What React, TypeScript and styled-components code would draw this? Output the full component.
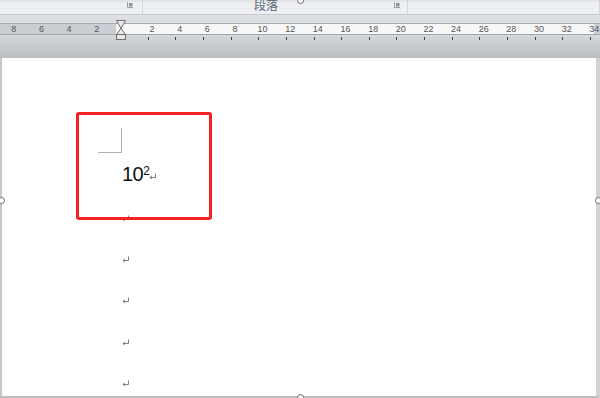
import React from 'react';
import styled, { createGlobalStyle } from 'styled-components';

const GlobalStyle = createGlobalStyle`
  html, body {
    margin: 0;
    padding: 0;
    overflow: hidden;
    background: #ffffff;
  }
  #root {
    width: 600px;
    height: 398px;
  }
`;

const cellWidth = 27.65;
const rulerLabels = [8, 6, 4, 2, 0, 2, 4, 6, 8, 10, 12, 14, 16, 18, 20, 22, 24, 26, 28, 30, 32, 34];

const Window = styled.div`
  position: relative;
  width: 600px;
  height: 398px;
  display: flex;
  flex-direction: column;
  overflow: hidden;
  font-family: 'Liberation Sans', Arial, sans-serif;
`;

const RibbonStrip = styled.div`
  flex-shrink: 0;
  height: 14px;
  display: flex;
  background: linear-gradient(#dcdfe3 0, #edeff2 3px, #eef0f3 100%);
  border-bottom: 1px solid #c6cad0;
`;

const RibbonGroup = styled.div<{ width: number; pad: number }>`
  width: ${(p) => p.width}px;
  position: relative;
  display: flex;
  justify-content: center;
  padding-right: ${(p) => p.pad}px;
  box-sizing: border-box;
  border-right: 1px solid #d3d6db;
  overflow: hidden;
`;

const GroupLabel = styled.span`
  font-family: 'Noto Sans CJK SC', sans-serif;
  font-size: 12px;
  line-height: 12px;
  margin-top: -1px;
  color: #5a6577;
`;

const Launcher = styled.svg<{ right: number }>`
  position: absolute;
  top: 2px;
  right: ${(p) => p.right}px;
  width: 6px;
  height: 6px;
`;

const RulerArea = styled.div`
  flex-shrink: 0;
  position: relative;
  height: 43px;
  padding-top: 8px;
  box-sizing: border-box;
  background: linear-gradient(#dfe1e5 0, #dadce0 8px, #d5d8dc 20px, #babdc2 100%);
`;

const Scale = styled.div`
  height: 10px;
  display: flex;
  margin-left: -3.8px;
  padding-left: 3.8px;
  border-top: 1px solid #a9adb3;
  border-bottom: 1px solid #a3a7ad;
  background: linear-gradient(to right, #cacdd2 0 120px, #f7f7f7 120px 598px, #cacdd2 598px);
`;

const ScaleCell = styled.div`
  flex: 0 0 ${cellWidth}px;
  text-align: center;
  font-size: 9px;
  line-height: 10px;
  color: #555555;
`;

const TickRow = styled.div`
  display: flex;
  margin-left: -3.8px;
  padding-top: 2px;
`;

const TickCell = styled.div<{ show: boolean }>`
  flex: 0 0 ${cellWidth}px;
  height: 3px;
  display: flex;
  justify-content: center;
  &::after {
    content: '';
    width: 1px;
    height: 3px;
    background: ${(p) => (p.show ? '#3d3d3d' : 'transparent')};
  }
`;

const IndentMarker = styled.svg`
  position: absolute;
  left: 115px;
  top: 4px;
  width: 12px;
  height: 22px;
`;

const Page = styled.div`
  position: relative;
  flex: 1;
  min-height: 0;
  overflow: hidden;
  background: #ffffff;
  border-left: 2px solid #c7c7c7;
  border-right: 4px solid #d3d3d3;
  border-bottom: 2px solid #bebebe;
  padding: 70px 0 0 96px;
`;

const CropMark = styled.div`
  width: 23px;
  height: 24px;
  border-right: 1px solid #b3b3b3;
  border-bottom: 1px solid #b3b3b3;
  margin-bottom: 1px;
`;

const Paragraph = styled.div`
  flex-shrink: 0;
  height: 41.4px;
  display: flex;
  align-items: center;
  padding-left: 24px;
`;

const MainText = styled.span`
  font-size: 20px;
  color: #111111;
  letter-spacing: -0.5px;
`;

const Sup = styled.sup`
  font-size: 12px;
  vertical-align: 6px;
  line-height: 0;
  color: #111111;
`;

const ReturnMark = styled.svg`
  width: 8px;
  height: 7px;
  margin-top: 4px;
`;

const Highlight = styled.div`
  position: absolute;
  left: 74px;
  top: 54px;
  width: 136px;
  height: 108px;
  box-sizing: border-box;
  border: 3px solid #f42222;
  border-radius: 3px;
`;

const Handle = styled.div<{ x: number; y: number }>`
  position: absolute;
  left: ${(p) => p.x - 3}px;
  top: ${(p) => p.y - 3}px;
  width: 5px;
  height: 5px;
  border-radius: 50%;
  border: 1px solid #6a6a6a;
  background: #ffffff;
`;

function Return() {
  return (
    <ReturnMark viewBox="0 0 8 7">
      <path d="M6.5 0.5 V4.5 H1.5" fill="none" stroke="#808080" strokeWidth="1" />
      <path d="M0.5 4.5 L2.8 2.6 V6.4 Z" fill="#808080" />
    </ReturnMark>
  );
}

function LauncherIcon({ right }: { right: number }) {
  return (
    <Launcher right={right} viewBox="0 0 6 6">
      <path d="M0.5 0 V5.5 H6" fill="none" stroke="#9aa0a8" strokeWidth="1" />
      <rect x="2" y="1" width="3.5" height="3.5" fill="#8f959d" />
    </Launcher>
  );
}

export default function App() {
  return (
    <Window>
      <GlobalStyle />
      <RibbonStrip>
        <RibbonGroup width={143} pad={0}>
          <LauncherIcon right={9} />
        </RibbonGroup>
        <RibbonGroup width={265} pad={18}>
          <GroupLabel>段落</GroupLabel>
          <LauncherIcon right={7} />
        </RibbonGroup>
        <RibbonGroup width={192} pad={0} />
      </RibbonStrip>

      <RulerArea>
        <Scale>
          {rulerLabels.map((n, i) => (
            <ScaleCell key={i}>{i === 4 ? '' : n}</ScaleCell>
          ))}
        </Scale>
        <TickRow>
          {rulerLabels.map((_, i) => (
            <TickCell key={i} show={i >= 5} />
          ))}
        </TickRow>
        <IndentMarker viewBox="0 0 12 22">
          <path d="M1.5 1.5 H10.5 L6 9.5 Z" fill="#e9e9e9" stroke="#6e6e6e" strokeWidth="1" />
          <path d="M6 9.5 L10.5 15.5 H1.5 Z" fill="#e9e9e9" stroke="#6e6e6e" strokeWidth="1" />
          <rect x="1.5" y="15.5" width="9" height="5" fill="#e9e9e9" stroke="#6e6e6e" strokeWidth="1" />
        </IndentMarker>
      </RulerArea>

      <Page>
        <CropMark />
        <Paragraph>
          <MainText>
            10<Sup>2</Sup>
          </MainText>
          <Return />
        </Paragraph>
        {[0, 1, 2, 3, 4].map((i) => (
          <Paragraph key={i}>
            <Return />
          </Paragraph>
        ))}
        <Highlight />
      </Page>

      <Handle x={1} y={200} />
      <Handle x={598} y={200} />
      <Handle x={300} y={0} />
      <Handle x={300} y={397} />
    </Window>
  );
}
